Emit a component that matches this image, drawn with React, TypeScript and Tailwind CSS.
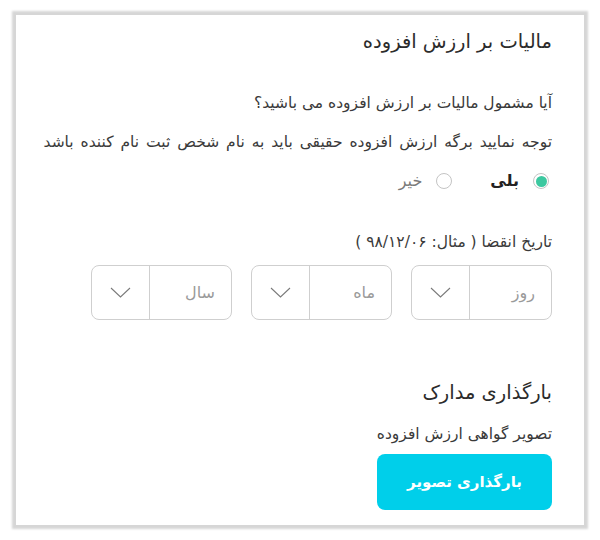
import React from 'react';

const DATE_PARTS = ['روز', 'ماه', 'سال'];

function DateSelect({ label }: { label: string }) {
  return (
    <div className="flex h-[55px] w-[141px] rounded-lg border border-[#cfcfcf] bg-white">
      <div className="flex flex-1 items-center px-4 text-[16px] text-[#9a9a9a]">{label}</div>
      <div className="flex w-[58px] items-center justify-center border-r border-[#cfcfcf]">
        <svg width="21" height="11" viewBox="0 0 21 11" fill="none">
          <polyline points="1,1 10.5,10 20,1" stroke="#7a7a7a" strokeWidth="1.1" />
        </svg>
      </div>
    </div>
  );
}

export default function App() {
  return (
    <div
      dir="rtl"
      className="min-h-[540px] bg-white px-[16px] pt-[15px] pb-[15px] text-[#3a3a3a]"
      style={{ fontFamily: '"DejaVu Sans", "Noto Sans", sans-serif' }}
    >
      <div className="h-[510px] bg-white pr-[32px] pl-[32px] pt-[13px] shadow-[0_0_2px_4px_rgba(0,0,0,0.16)]">
        {/* VAT section */}
        <h2 className="text-[19.5px] leading-[28px] text-[#2b2b2b]">مالیات بر ارزش افزوده</h2>

        <p className="mt-[36px] text-[15.5px] leading-[22px]">آیا مشمول مالیات بر ارزش افزوده می باشید؟</p>
        <p className="mt-[17px] text-[15.5px] leading-[22px] whitespace-nowrap [word-spacing:2px]">
          توجه نمایید برگه ارزش افزوده حقیقی باید به نام شخص ثبت نام کننده باشد
        </p>

        <div className="mt-[17px] flex h-[22px] items-center gap-[38px] pr-[3px]">
          <label className="flex items-center gap-[14px]">
            <span className="flex h-[16px] w-[16px] items-center justify-center rounded-full border border-[#c4c4c4]">
              <span className="h-[11px] w-[11px] rounded-full bg-[#3dc8a0]" />
            </span>
            <span className="text-[16px] font-bold text-[#222]">بلی</span>
          </label>
          <label className="flex items-center gap-[14px]">
            <span className="h-[16px] w-[16px] rounded-full border border-[#c4c4c4]" />
            <span className="text-[16px] text-[#7a7a7a]">خیر</span>
          </label>
        </div>

        <p className="mt-[39px] text-[15.5px] leading-[22px]">تاریخ انقضا ( مثال: ۹۸/۱۲/۰۶ )</p>

        <div className="mt-[12px] flex gap-[19px]">
          {DATE_PARTS.map((p) => (
            <DateSelect key={p} label={p} />
          ))}
        </div>

        {/* Documents */}
        <h2 className="mt-[59px] text-[19.5px] leading-[28px] text-[#2b2b2b]">بارگذاری مدارک</h2>
        <p className="mt-[16px] text-[15.5px] leading-[22px]">تصویر گواهی ارزش افزوده</p>
        <button className="mt-[9px] flex h-[56px] w-[175px] items-center justify-center rounded-lg bg-[#00cfea] text-[15px] font-bold text-white">
          بارگذاری تصویر
        </button>
      </div>
    </div>
  );
}
